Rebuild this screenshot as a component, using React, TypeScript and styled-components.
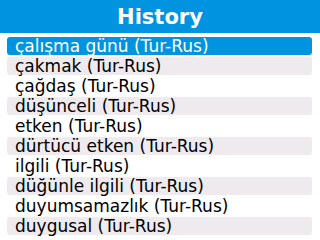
import React from 'react';
import styled, { createGlobalStyle } from 'styled-components';

const entries: string[] = [
    'çalışma günü (Tur-Rus)',
    'çakmak (Tur-Rus)',
    'çağdaş (Tur-Rus)',
    'düşünceli (Tur-Rus)',
    'etken (Tur-Rus)',
    'dürtücü etken (Tur-Rus)',
    'ilgili (Tur-Rus)',
    'düğünle ilgili (Tur-Rus)',
    'duyumsamazlık (Tur-Rus)',
    'duygusal (Tur-Rus)',
];

const GlobalStyle = createGlobalStyle`
    html, body {
        margin: 0;
        padding: 0;
        background: #ffffff;
    }
    body {
        font-family: 'DejaVu Sans', 'Liberation Sans', sans-serif;
    }
`;

const Screen = styled.div`
    width: 320px;
    height: 240px;
    overflow: hidden;
    background: #ffffff;
`;

const TitleBar = styled.div`
    height: 33px;
    background: #0094e0;
    color: #ffffff;
    display: flex;
    align-items: center;
    justify-content: center;
    font-weight: bold;
    font-size: 21px;
`;

const List = styled.div`
    display: flex;
    flex-direction: column;
    gap: 2px;
    padding: 4px 8px 0 7px;
`;

const Row = styled.div<{ $selected?: boolean; $shaded?: boolean }>`
    height: 18px;
    line-height: 18px;
    padding-left: 8px;
    border-radius: 3px;
    font-size: 17px;
    white-space: nowrap;
    color: ${p => (p.$selected ? '#ffffff' : '#000000')};
    background: ${p => (p.$selected ? '#0094e0' : p.$shaded ? '#eeeaee' : 'transparent')};
`;

export default function App() {
    return (
        <>
            <GlobalStyle />
            <Screen>
                <TitleBar>History</TitleBar>
                <List>
                    {entries.map((item, index) => (
                        <Row key={index} $selected={index === 0} $shaded={index % 2 === 1}>
                            {item}
                        </Row>
                    ))}
                </List>
            </Screen>
        </>
    );
}
